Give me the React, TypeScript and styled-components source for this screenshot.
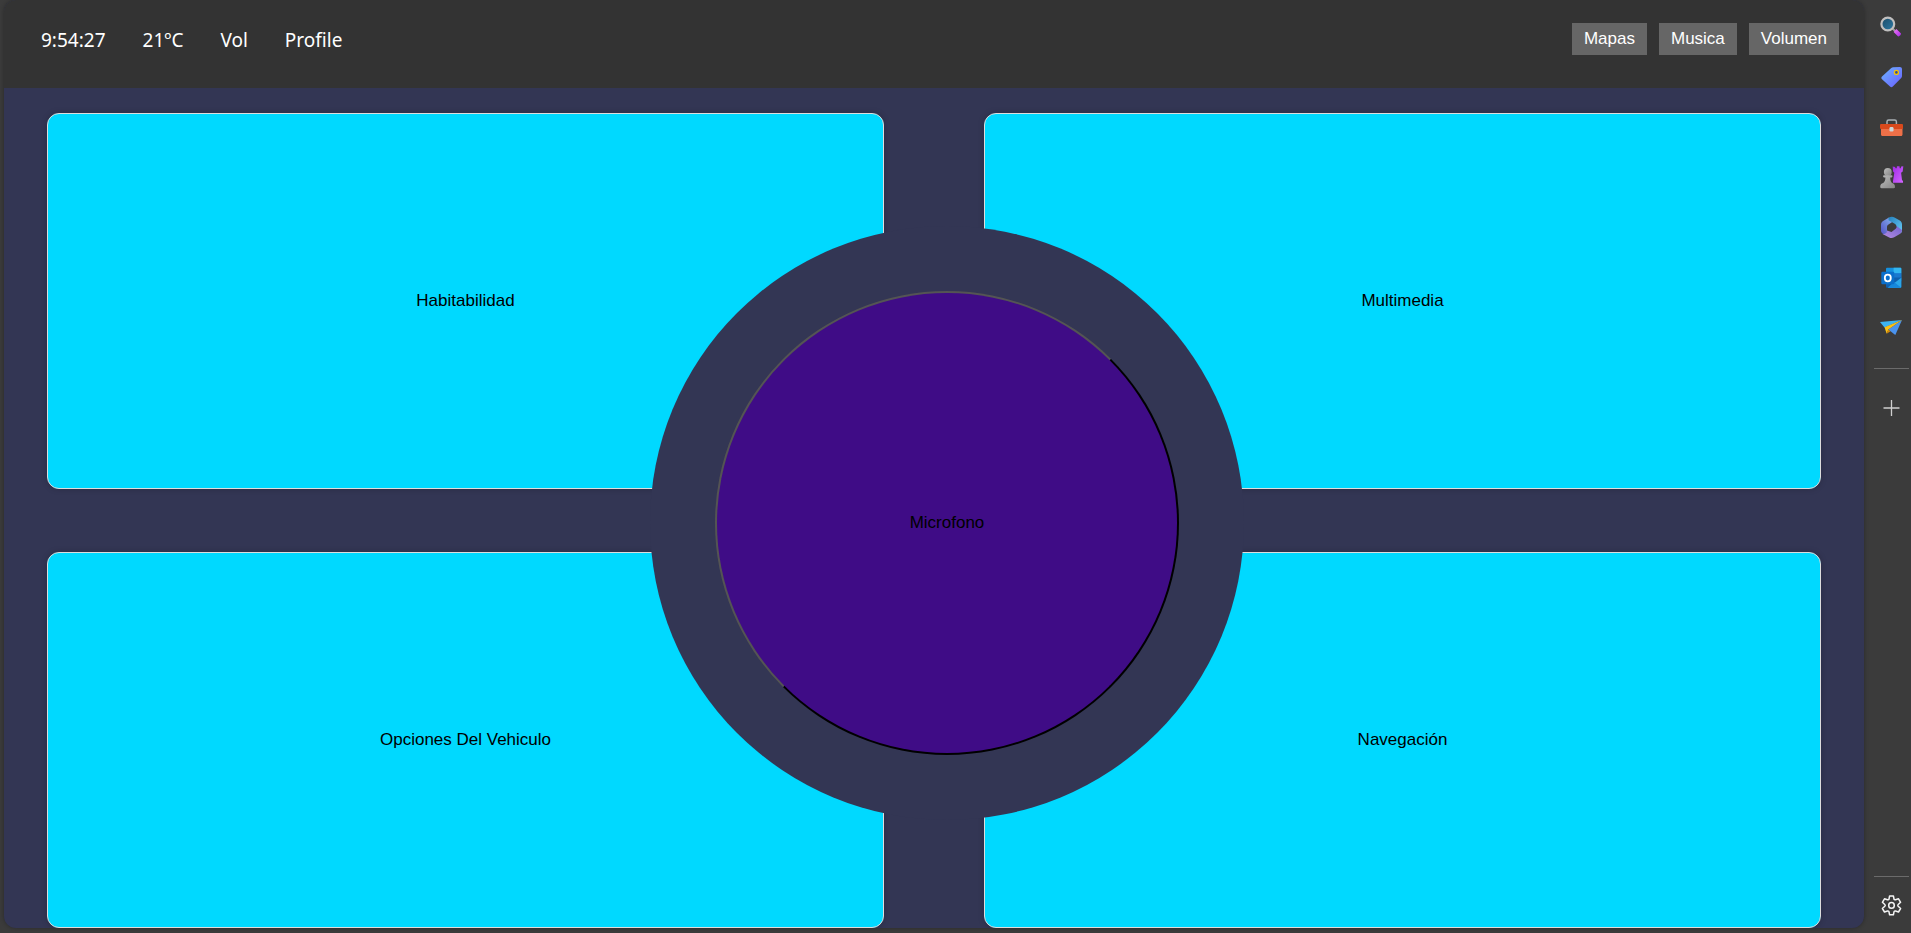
import React from "react";
import styled, { createGlobalStyle } from "styled-components";

const colors = {
  chrome: "#3b3b3b",
  header: "#333333",
  page: "#333654",
  card: "#00d9ff",
  cardEdge: "#dddddd",
  mic: "#3f0c86",
  headerButton: "#666666",
  line: "#6b6b6b",
};

const GlobalStyle = createGlobalStyle`
  *, *::before, *::after { box-sizing: border-box; }
  body { margin: 0; background: ${colors.chrome}; }
  button { font: inherit; cursor: pointer; }
`;

const Shell = styled.div`
  display: flex;
  min-height: 100vh;
  font-family: "Liberation Sans", Arial, sans-serif;
  font-size: 17px;
`;

const Frame = styled.div`
  display: flex;
  flex: 1;
  flex-direction: column;
  min-width: 0;
  margin: 0 0 5px 4px;
  overflow: hidden;
  border-radius: 12px;
  background: ${colors.page};
  box-shadow: 0 0 4px rgba(0, 0, 0, 0.3);
`;

const Header = styled.header`
  display: flex;
  align-items: flex-start;
  justify-content: space-between;
  min-height: 88px;
  padding: 23px 25px 0 37px;
  background: ${colors.header};
  color: #ffffff;
`;

const StatusList = styled.div`
  display: flex;
  gap: 37px;
  font-family: "Noto Sans", "Open Sans", sans-serif;
  font-size: 19px;
  line-height: 34px;
`;

const HeaderNav = styled.nav`
  display: flex;
  gap: 12px;
`;

const HeaderButton = styled.button`
  height: 32px;
  padding: 0 12px;
  border: 0;
  background: ${colors.headerButton};
  color: #ffffff;
`;

const Main = styled.main`
  display: flex;
  flex: 1;
  padding: 25px 43px 0;
`;

const CardGrid = styled.div`
  position: relative;
  display: grid;
  flex: 1;
  grid-template-columns: 1fr 1fr;
  grid-template-rows: 1fr 1fr;
  gap: 63px 100px;
`;

const Card = styled.button`
  min-height: 260px;
  border: 1px solid ${colors.cardEdge};
  border-radius: 12px;
  background: ${colors.card};
  color: #000000;
  box-shadow: 0 0 6px rgba(0, 0, 0, 0.2);
`;

const MicButton = styled.button`
  position: absolute;
  top: calc(50% + 2px);
  left: calc(50% + 13px);
  width: 464px;
  height: 464px;
  transform: translate(-50%, -50%);
  border: 2px solid;
  border-color: #545454 #000000 #000000 #545454;
  border-radius: 50%;
  background: ${colors.mic};
  color: #000000;
  box-shadow: 0 0 0 65px ${colors.page};
`;

const Sidebar = styled.aside`
  display: flex;
  flex-direction: column;
  width: 47px;
  padding: 2px 0 2px 9px;
`;

const SideButton = styled.button`
  display: flex;
  align-items: center;
  justify-content: center;
  height: 50px;
  padding: 0;
  border: 0;
  background: none;
`;

const SideDivider = styled.hr<{ $before: string; $after: string }>`
  width: 35px;
  height: 1px;
  margin: ${(p) => p.$before} 0 ${(p) => p.$after} 1px;
  border: 0;
  background: ${colors.line};
`;

const Glyph = styled.svg.attrs({
  width: 24,
  height: 24,
  viewBox: "0 0 24 24",
  "aria-hidden": true,
})`
  display: block;
  fill: none;
`;

const SearchIcon = () => (
  <Glyph>
    <defs>
      <linearGradient id="lens" x1="0" y1="0" x2="1" y2="1">
        <stop offset="0" stopColor="#1b4a66" />
        <stop offset="1" stopColor="#2d7ba6" />
      </linearGradient>
      <linearGradient id="handle" x1="0" y1="0" x2="1" y2="1">
        <stop offset="0" stopColor="#f07bf5" />
        <stop offset="1" stopColor="#a626e8" />
      </linearGradient>
    </defs>
    <path d="M12.500 13.500l2.500 2.500" stroke="#9b9b9b" strokeWidth="2" />
    <circle cx="7.800" cy="9" r="6.400" fill="url(#lens)" stroke="#c0bfbf" strokeWidth="2.200" />
    <path d="M13.600 16.900l2.800-2.800 4.400 4.200c1 1-1.900 3.900-2.900 2.900z" fill="url(#handle)" />
  </Glyph>
);

const TagIcon = () => (
  <Glyph>
    <defs>
      <linearGradient id="tag" x1="0" y1="0" x2="1" y2="1">
        <stop offset="0" stopColor="#6cb6ff" />
        <stop offset="1" stopColor="#6a5cff" />
      </linearGradient>
    </defs>
    <path
      d="M11.300 3c.6-.6 1.100-.8 1.900-.8l6.600-.2c1.300 0 2.200.9 2.200 2.200v6.800c0 .8-.2 1.400-.8 2l-8.400 8.500c-.9.9-1.900.9-2.800 0l-8-7.200c-.9-.8-.9-1.800 0-2.700z"
      fill="url(#tag)"
    />
    <circle cx="16.400" cy="7.400" r="2" fill="#314a9e" stroke="#f5c400" strokeWidth="1.300" />
  </Glyph>
);

const ToolboxIcon = () => (
  <Glyph>
    <path d="M7 9.500V6.700C7 5.700 7.700 5 8.700 5h6c1 0 1.700.7 1.700 1.700v2.800" stroke="#a9b0b4" strokeWidth="1.500" />
    <path d="M1 13h21.500v6.500c0 .9-.6 1.500-1.500 1.500H2.500C1.600 21 1 20.400 1 19.500z" fill="#ee7048" />
    <path d="M1.500 9h20c1 0 1.500.5 1.500 1.400v2.100c0 1-.5 1.500-1.500 1.500h-20C.5 14 0 13.500 0 12.500v-2.100C0 9.500.5 9 1.500 9z" fill="#d9491c" />
    <rect x="9.500" y="12" width="4" height="4.500" rx="1.200" fill="#cfd6d8" />
  </Glyph>
);

const GamesIcon = () => (
  <Glyph>
    <defs>
      <linearGradient id="rook" x1="0" y1="0" x2="1" y2="1">
        <stop offset="0" stopColor="#a12be8" />
        <stop offset="1" stopColor="#d267ff" />
      </linearGradient>
      <linearGradient id="pawn" x1="0" y1="0" x2="1" y2="1">
        <stop offset="0" stopColor="#bdbdbd" />
        <stop offset="1" stopColor="#858585" />
      </linearGradient>
    </defs>
    <path d="M12.700 1.500l2.400.4.400 1.400h1.200l.2-2h2.600l.2 2h1l.4-1.700 2.200-.4-.6 5.300-1.600 1.300.9 7.200 1 1v1.800h-10V16l1.300-8.200-1.200-1.300z" fill="url(#rook)" />
    <circle cx="7.800" cy="7" r="3.900" fill="url(#pawn)" />
    <path d="M4 10.200h7.600c1.200 0 1.200 2.200 0 2.200h-1.400c0 2.600.6 4.300 1.800 5.600 1.900.3 3 1.700 3 4 0 .8-.5 1.200-1.200 1.200H1.500C.7 23.200.2 22.800.2 22c0-2.300 1.100-3.700 3-4 1.500-1.300 2.200-3 2.200-5.600H4c-1.200 0-1.200-2.200 0-2.200z" fill="url(#pawn)" />
  </Glyph>
);

const OfficeIcon = () => (
  <Glyph>
    <defs>
      <linearGradient id="o1" x1="1" y1="0" x2="0" y2="1">
        <stop offset="0" stopColor="#86b4ee" />
        <stop offset="1" stopColor="#5353c6" />
      </linearGradient>
      <linearGradient id="o2" x1="0" y1="0" x2="1" y2="1">
        <stop offset="0" stopColor="#2480bd" />
        <stop offset="1" stopColor="#6accf5" />
      </linearGradient>
      <linearGradient id="o3" x1="0" y1="1" x2="1" y2="0">
        <stop offset="0" stopColor="#b78be3" />
        <stop offset="1" stopColor="#7164cf" />
      </linearGradient>
    </defs>
    <path d="M9 2.500L3.500 5.800C1.800 6.800 1 8 1 10v5.500c0 2 1.500 3.700 3.500 3.700 1.600 0 2.500-1 2.500-2.700v-4.500c0-1.300.5-2 1.500-2.600L13 6.500z" fill="url(#o1)" />
    <path d="M8.500 2.800C10.500 1.500 12.500 1.300 14.500 2.400l5.300 3.200C21.300 6.500 22 7.800 22 9.500v5.500c0 1.500-.5 2.500-1.500 3.300L16.500 11c-.4-1.200-1-2-2.200-2.600L8.500 5.200z" fill="url(#o2)" />
    <path d="M16.500 11c.3 1 .1 2-.8 2.700L11.500 17 7 15.500c0 2.300-1.400 3.800-4.500 3.500l6.700 3.500c1.700.9 3.300.8 5-.2l5.600-3.300c1.500-.9 2.200-2.200 2.200-4z" fill="url(#o3)" />
  </Glyph>
);

const OutlookIcon = () => (
  <Glyph>
    <rect x="6" y="2.700" width="15.300" height="14" rx="1" fill="#1490df" />
    <path d="M13.600 2.700h6.700c.6 0 1 .4 1 1v4.600h-7.700z" fill="#32b5f0" />
    <path d="M13.600 8.300h7.700v5h-7.700z" fill="#1a78cf" />
    <path d="M6 12.500h15.300v9.200c0 .6-.4 1-1 1H7c-.6 0-1-.4-1-1z" fill="#0f5fae" />
    <path d="M21.300 12.700v9c0 .6-.4 1-1 1H8z" fill="#2aa6ea" />
    <path d="M14 17l7 5.500c-.2.100-.4.200-.7.200H7.500z" fill="#1687dc" />
    <rect x="1.300" y="6.800" width="13" height="12.400" rx="1.200" fill="#0b6fcb" />
    <ellipse cx="7.800" cy="13" rx="3" ry="3.300" stroke="#ffffff" strokeWidth="1.800" />
  </Glyph>
);

const DropIcon = () => (
  <Glyph>
    <path d="M0 7l22-2L4.500 12.500z" fill="#3db4f2" />
    <path d="M22 5L15.300 20l-7-5.500z" fill="#4a93ee" />
    <path d="M22 5L4.500 12.300l2.200 6.400 1.600-4.200z" fill="#fbc116" />
    <path d="M8.300 14.500l2.200 1.700-3.800 2.500z" fill="#d98a06" />
  </Glyph>
);

const PlusIcon = () => (
  <Glyph>
    <path d="M11.500 4v16M3.500 12h16" stroke="#cfcfcf" strokeWidth="1.300" />
  </Glyph>
);

const GearIcon = () => (
  <Glyph stroke="#f5f5f5" strokeWidth="1.500" strokeLinejoin="round">
    <path d="M9.600 2h3.800l.6 3c.1.500.9 1 1.500.8l3-1 2.100 3.500-2.400 2.200c-.5.500-.5 1.300 0 1.800l2.400 2.200-2.100 3.500-3-1c-.6-.2-1.400.3-1.500.8l-.6 3H9.600l-.6-3c-.1-.5-.9-1-1.500-.8l-3 1-2.100-3.500 2.400-2.200c.5-.5.5-1.300 0-1.800L2.400 8.300l2.100-3.500 3 1c.6.200 1.400-.3 1.500-.8z" />
    <circle cx="11.500" cy="11.400" r="2.800" />
  </Glyph>
);

const statusItems = ["9:54:27", "21ºC", "Vol", "Profile"];
const headerActions = ["Mapas", "Musica", "Volumen"];
const sections = ["Habitabilidad", "Multimedia", "Opciones Del Vehiculo", "Navegación"];
const sideApps = [
  { name: "Search", Icon: SearchIcon },
  { name: "Shopping", Icon: TagIcon },
  { name: "Tools", Icon: ToolboxIcon },
  { name: "Games", Icon: GamesIcon },
  { name: "Microsoft 365", Icon: OfficeIcon },
  { name: "Outlook", Icon: OutlookIcon },
  { name: "Drop", Icon: DropIcon },
];

export default function App() {
  return (
    <>
      <GlobalStyle />
      <Shell>
        <Frame>
          <Header>
            <StatusList>
              {statusItems.map((item) => (
                <span key={item}>{item}</span>
              ))}
            </StatusList>
            <HeaderNav>
              {headerActions.map((label) => (
                <HeaderButton key={label} type="button">
                  {label}
                </HeaderButton>
              ))}
            </HeaderNav>
          </Header>
          <Main>
            <CardGrid>
              {sections.map((label) => (
                <Card key={label} type="button">
                  {label}
                </Card>
              ))}
              <MicButton type="button">Microfono</MicButton>
            </CardGrid>
          </Main>
        </Frame>
        <Sidebar>
          {sideApps.map(({ name, Icon }) => (
            <SideButton key={name} type="button" aria-label={name}>
              <Icon />
            </SideButton>
          ))}
          <SideDivider $before="16px" $after="14px" />
          <SideButton type="button" aria-label="Customize">
            <PlusIcon />
          </SideButton>
          <SideDivider $before="auto" $after="4px" />
          <SideButton type="button" aria-label="Settings">
            <GearIcon />
          </SideButton>
        </Sidebar>
      </Shell>
    </>
  );
}
